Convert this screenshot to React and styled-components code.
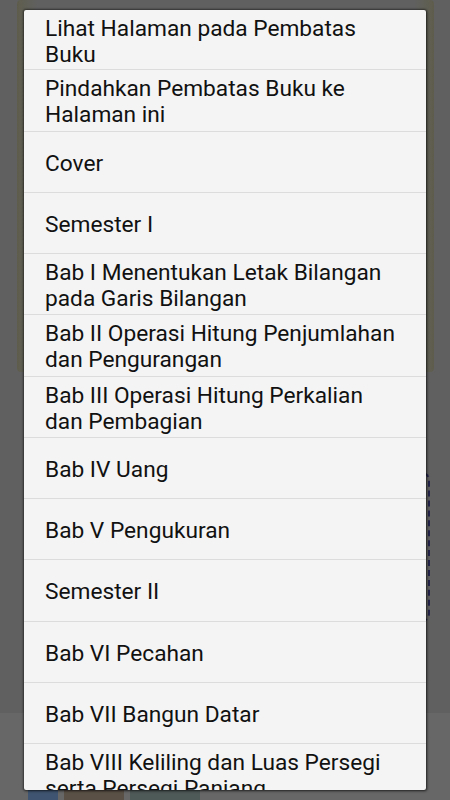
import React from "react";
import styled, { createGlobalStyle } from "styled-components";

const Global = createGlobalStyle`
  html, body { margin: 0; padding: 0; }
  body {
    width: 450px;
    height: 800px;
    overflow: hidden;
    background: #606060;
    font-family: Roboto, "Noto Sans", "Liberation Sans", sans-serif;
  }
`;

const Screen = styled.div`
  position: relative;
  width: 450px;
  height: 800px;
  overflow: hidden;
  background: #606060;
  display: flex;
  flex-direction: column;
`;

const Backdrop = styled.div`
  flex: 1;
  display: flex;
  flex-direction: column;
  padding: 0 16px 0 17px;
`;

const DimCard = styled.div`
  height: 372px;
  border-radius: 4px;
  background: linear-gradient(90deg, #5e5d4c 0, #605f55 8px, #606060 20px, #606060 calc(100% - 20px), #605f55 calc(100% - 8px), #5e5d4c 100%);
`;

const DashedRow = styled.div`
  display: flex;
  justify-content: flex-end;
  margin-top: 100px;
  margin-right: 4px;
`;

const DashedBox = styled.div`
  width: 60px;
  height: 146px;
  border: 2px dashed #24244a;
  border-radius: 8px;
`;

const BottomBar = styled.div`
  height: 87px;
  background: #676767;
  display: flex;
  align-items: flex-end;
  gap: 6px;
  padding: 0 0 0 28px;
`;

const Thumb = styled.div`
  width: ${(p) => p.$w}px;
  height: 12px;
  background: ${(p) => p.$c};
`;

const Dialog = styled.div`
  position: absolute;
  top: 10px;
  left: 24px;
  width: 402px;
  height: 780px;
  background: #f4f4f4;
  border-radius: 2px;
  overflow: hidden;
  box-shadow: 0 0 2px 1px rgba(0, 0, 0, 0.45), 1px 1px 3px rgba(0, 0, 0, 0.35);
  display: flex;
  flex-direction: column;
`;

const Item = styled.div`
  flex: 0 0 auto;
  box-sizing: border-box;
  height: ${(p) => (p.$first ? "60.25px" : "61.25px")};
  border-bottom: 1px solid #dcdcdc;
  display: flex;
  align-items: center;
  padding: 4px 22px 0 21px;
  font-size: 22.7px;
  line-height: 26px;
  color: #111;
`;

const Label = styled.span`
  display: block;
`;

const items = [
  "Lihat Halaman pada Pembatas Buku",
  "Pindahkan Pembatas Buku ke Halaman ini",
  "Cover",
  "Semester I",
  "Bab I Menentukan Letak Bilangan pada Garis Bilangan",
  "Bab II Operasi Hitung Penjumlahan dan Pengurangan",
  "Bab III Operasi Hitung Perkalian dan Pembagian",
  "Bab IV Uang",
  "Bab V Pengukuran",
  "Semester II",
  "Bab VI Pecahan",
  "Bab VII Bangun Datar",
  "Bab VIII Keliling dan Luas Persegi serta Persegi Panjang",
];

export default function App() {
  return (
    <>
      <Global />
      <Screen>
        <Backdrop>
          <DimCard />
          <DashedRow>
            <DashedBox />
          </DashedRow>
        </Backdrop>
        <BottomBar>
          <Thumb $w={30} $c="#3f5470" />
          <Thumb $w={60} $c="#5a5046" />
          <Thumb $w={70} $c="#4e5a58" />
        </BottomBar>
        <Dialog>
          {items.map((t, i) => (
            <Item key={i} $first={i === 0}>
              <Label>{t}</Label>
            </Item>
          ))}
        </Dialog>
      </Screen>
    </>
  );
}
